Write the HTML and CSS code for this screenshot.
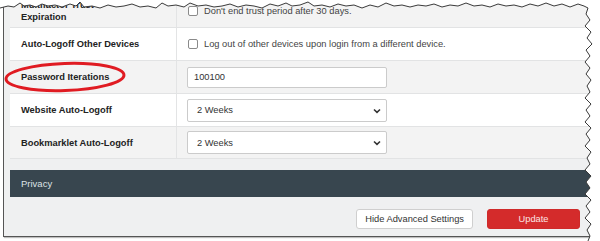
FILE: index.html
```html
<!DOCTYPE html>
<html>

<head>
    <link rel="stylesheet" href="styles.css">
</head>

<body>
    <div class="frame">
        <div class="settings">
            <div class="row odd">
                <div class="label">Multifactor Trust<br>Expiration</div>
                <div class="value"><span class="box"></span><span class="text">Don't end trust period after 30 days.</span></div>
            </div>
            <div class="row">
                <div class="label">Auto-Logoff Other Devices</div>
                <div class="value"><span class="box"></span><span class="text">Log out of other devices upon login from a different device.</span></div>
            </div>
            <div class="row odd">
                <div class="label">Password Iterations</div>
                <div class="value"><div class="field">100100</div></div>
            </div>
            <div class="row">
                <div class="label">Website Auto-Logoff</div>
                <div class="value">
                    <div class="field select">2 Weeks
                        <svg class="chev" width="8" height="6" viewBox="0 0 8 6"><path d="M1 1.5 L4 4.3 L7 1.5" fill="none" stroke="#333" stroke-width="1.6"/></svg>
                    </div>
                </div>
            </div>
            <div class="row odd last">
                <div class="label">Bookmarklet Auto-Logoff</div>
                <div class="value">
                    <div class="field select">2 Weeks
                        <svg class="chev" width="8" height="6" viewBox="0 0 8 6"><path d="M1 1.5 L4 4.3 L7 1.5" fill="none" stroke="#333" stroke-width="1.6"/></svg>
                    </div>
                </div>
            </div>
        </div>
        <div class="section">Privacy</div>
        <div class="footer">
            <button class="btn">Hide Advanced Settings</button>
            <button class="btn red">Update</button>
        </div>
    </div>

    <!-- red marker round the label -->
    <svg class="oval" width="130" height="36" viewBox="0 0 130 36">
        <ellipse cx="64" cy="17" rx="59" ry="13.5" fill="none" stroke="#e01b22" stroke-width="3" transform="rotate(-2 64 17)"/>
    </svg>

    <!-- torn edge of the screenshot -->
    <svg class="tear" width="600" height="241" viewBox="0 0 600 241">
        <polygon fill="#fff" points="0,0 600,0 600,241 588,241 590,236 587,230 591,224 585,218 590,212 586,206 591,200 585,194 590,188 586,182 591,176 585,170 590,164 587,158 591,152 585,146 590,140 586,134 591,128 585,122 590,116 586,110 591,104 585,98 590,92 587,86 591,80 586,74 590,68 585,62 590,56 586,50 592,44 587,38 591,32 585,26 590,20 586,14 588,8 584,6 578,4 570,7 562,4 554,6 546,3 538,6 530,4 522,7 514,5 506,6 498,4 490,7 482,5 474,6 466,3 458,6 450,5 442,7 434,4 426,6 418,5 410,7 402,5 394,6 386,3 378,7 370,5 362,8 354,5 346,6 338,4 330,7 322,5 314,6 308,2 300,5 292,6 286,3 278,6 270,4 262,8 254,6 246,5 238,7 230,4 222,6 214,7 206,5 198,6 190,3 184,7 176,5 168,6 162,3 156,8 148,6 140,7 132,4 124,6 116,7 108,5 100,8 92,6 84,7 80,2 76,6 70,4 62,7 55,5 48,6 42,4 36,7 30,5 24,6 20,3 14,7 8,6 0,8"/>
        <polyline fill="none" stroke="#3a3a3a" stroke-width="1" points="0,8 8,6 14,7 20,3 24,6 30,5 36,7 42,4 48,6 55,5 62,7 70,4 76,6 80,2 84,7 92,6 100,8 108,5 116,7 124,6 132,4 140,7 148,6 156,8 162,3 168,6 176,5 184,7 190,3 198,6 206,5 214,7 222,6 230,4 238,7 246,5 254,6 262,8 270,4 278,6 286,3 292,6 300,5 308,2 314,6 322,5 330,7 338,4 346,6 354,5 362,8 370,5 378,7 386,3 394,6 402,5 410,7 418,5 426,6 434,4 442,7 450,5 458,6 466,3 474,6 482,5 490,7 498,4 506,6 514,5 522,7 530,4 538,6 546,3 554,6 562,4 570,7 578,4 584,6 588,8 586,14 590,20 585,26 591,32 587,38 592,44 586,50 590,56 585,62 590,68 586,74 591,80 587,86 590,92 585,98 591,104 586,110 590,116 585,122 591,128 586,134 590,140 585,146 591,152 587,158 590,164 585,170 591,176 586,182 590,188 585,194 591,200 586,206 590,212 585,218 591,224 587,230 590,236 588,241"/>
    </svg>
</body>

</html>
```

FILE: styles.css
```css
body {
    margin: 0;
    width: 600px;
    height: 241px;
    overflow: hidden;
    position: relative;
    background: #fff;
    font-family: "Liberation Sans", Arial, sans-serif;
    font-size: 9.3px;
    color: #333;
}

.frame {
    margin-left: 3px;
    width: 590px;
    height: 236px;
    padding-left: 6px;
    border-left: 1px solid #555;
    border-bottom: 1px solid #555;
    box-shadow: 1px 1px 1px rgba(0, 0, 0, 0.25);
    background: #eff0f1;
    display: flex;
    flex-direction: column;
    overflow: hidden;
}

.settings {
    margin-top: -5px;
}

.row {
    display: grid;
    grid-template-columns: 167px 1fr;
    height: 33px;
    box-sizing: border-box;
    border-bottom: 1px solid #e2e3e4;
    background: #fff;
}

.row.odd {
    background: #f3f3f3;
}

.row.last {
    height: 32px;
}

.label {
    display: flex;
    align-items: center;
    padding-left: 11px;
    border-right: 1px solid #e3e4e5;
    font-weight: bold;
    color: #222;
    line-height: 12px;
}

.value {
    display: flex;
    align-items: center;
    padding-left: 10px;
}

.box {
    width: 8px;
    height: 8px;
    margin-left: 1px;
    border: 1px solid #8a8a8a;
    border-radius: 2px;
    background: #fff;
}

.text {
    margin-left: 6px;
    color: #444;
}

.field {
    position: relative;
    width: 200px;
    height: 21px;
    box-sizing: border-box;
    padding-left: 6px;
    border: 1px solid #cbcbcb;
    border-radius: 2px;
    background: #fff;
    display: flex;
    align-items: center;
    color: #333;
}

.field.select {
    height: 23px;
    padding-left: 9px;
}

.chev {
    position: absolute;
    right: 5px;
    top: 8px;
}

.section {
    margin-top: 11px;
    height: 27px;
    padding-left: 11px;
    display: flex;
    align-items: center;
    background: #38464f;
    color: #dde2e5;
    font-size: 9.5px;
}

.footer {
    display: flex;
    justify-content: flex-end;
    gap: 14px;
    padding: 12px 20px 0 0;
}

.btn {
    height: 20px;
    padding: 0 8px;
    border: 1px solid #cfcfcf;
    border-radius: 3px;
    background: #fff;
    font-family: "Liberation Sans", Arial, sans-serif;
    font-size: 9.3px;
    color: #333;
}

.btn.red {
    width: 93px;
    border-color: #cf2a2a;
    background: #d42b2b;
    color: #fbe3e3;
}

.oval {
    position: absolute;
    left: 1px;
    top: 60px;
}

.tear {
    position: absolute;
    left: 0;
    top: 0;
}
```
